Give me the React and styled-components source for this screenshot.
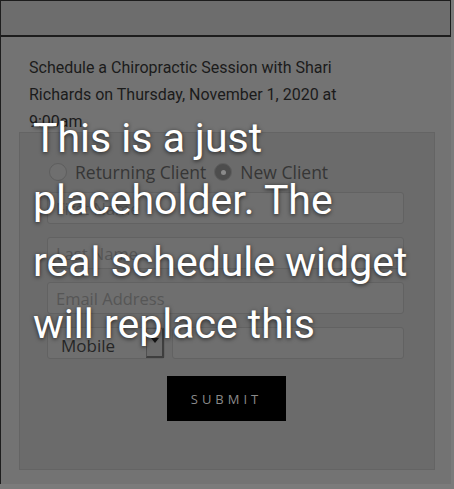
import React from "react";
import styled, { createGlobalStyle } from "styled-components";

const GlobalStyle = createGlobalStyle`
  html, body {
    margin: 0;
    padding: 0;
    background: #7b7b7b;
    font-family: "Roboto", "Liberation Sans", sans-serif;
  }
`;

const App = () => {
  return (
    <>
      <GlobalStyle />
      <Modal>
        <Header />
        <Body>
          <Description>
            Schedule a Chiropractic Session with Shari Richards on Thursday,
            November 1, 2020 at 9:00am
          </Description>
          <FormPanel>
            <RadioRow>
              <RadioLabel>
                <Radio />
                Returning Client
              </RadioLabel>
              <RadioLabel>
                <Radio checked />
                New Client
              </RadioLabel>
            </RadioRow>
            <Field placeholder="First Name" />
            <Field placeholder="Last Name" />
            <Field placeholder="Email Address" />
            <PhoneRow>
              <Select>
                <SelectText>Mobile</SelectText>
                <SelectArrow>
                  <svg width="8" height="5" viewBox="0 0 8 5">
                    <path d="M0 0h8L4 5z" fill="#161616" />
                  </svg>
                </SelectArrow>
              </Select>
              <PhoneField />
            </PhoneRow>
            <SubmitButton>SUBMIT</SubmitButton>
          </FormPanel>
          <Placeholder>
            This is a just
            <br />
            placeholder. The
            <br />
            real schedule widget
            <br />
            will replace this
          </Placeholder>
        </Body>
      </Modal>
    </>
  );
};

const Modal = styled.div`
  width: 451px;
  height: 484px;
  background: #737373;
  border-left: 1px solid #1e1e1e;
  display: flex;
  flex-direction: column;
  box-sizing: border-box;
`;

const Header = styled.div`
  height: 37px;
  box-sizing: border-box;
  background: #6d6d6d;
  border: 1px solid #1c1c1c;
  border-left: none;
  border-bottom-width: 2px;
`;

const Body = styled.div`
  position: relative;
  flex: 1;
  padding: 17px 16px 12px 18px;
  display: flex;
  flex-direction: column;
`;

const Description = styled.p`
  margin: 0 0 0 10px;
  font-size: 16px;
  line-height: 27px;
  color: #1b1b1b;
  width: 352px;
`;

const FormPanel = styled.div`
  margin-top: -3px;
  height: 338px;
  box-sizing: border-box;
  background: #6b6b6b;
  border: 1px solid #646464;
  padding: 28px 30px 0 27px;
  display: flex;
  flex-direction: column;
`;

const RadioRow = styled.div`
  display: flex;
  align-items: center;
  gap: 6px;
  height: 22px;
  margin-bottom: 9px;
`;

const RadioLabel = styled.label`
  display: flex;
  align-items: center;
  gap: 8px;
  font-family: "Open Sans", "Liberation Sans", sans-serif;
  font-size: 17.5px;
  color: #363636;
  margin-left: 2px;
`;

const Radio = styled.span`
  width: 18px;
  height: 18px;
  border-radius: 50%;
  box-sizing: border-box;
  border: 1px solid #5e5e5e;
  background: ${(p) => (p.checked ? "#4d4d4d" : "#6f6f6f")};
  display: grid;
  place-items: center;
  &::after {
    content: "";
    width: 5px;
    height: 5px;
    border-radius: 50%;
    background: ${(p) => (p.checked ? "#8a8a8a" : "transparent")};
  }
`;

const Field = styled.input`
  display: block;
  width: 357px;
  height: 32px;
  box-sizing: border-box;
  margin: 0 0 13px;
  padding: 0 8px;
  background: #6f6f6f;
  border: 1px solid #626262;
  border-radius: 3px;
  font-family: "Open Sans", "Liberation Sans", sans-serif;
  font-size: 16.5px;
  color: #2a2a2a;
  outline: none;
  &::placeholder {
    color: #565656;
  }
`;

const PhoneRow = styled.div`
  display: flex;
  gap: 7px;
  width: 357px;
`;

const Select = styled.div`
  width: 118px;
  height: 32px;
  box-sizing: border-box;
  background: #6f6f6f;
  border: 1px solid #626262;
  border-radius: 3px;
  display: flex;
  align-items: stretch;
`;

const SelectText = styled.span`
  flex: 1;
  font-family: "Open Sans", "Liberation Sans", sans-serif;
  font-size: 17px;
  color: #262626;
  padding: 6px 0 0 13px;
`;

const SelectArrow = styled.span`
  width: 18px;
  border: 1px solid #505050;
  border-right: 2px solid #3e3e3e;
  border-bottom: 2px solid #3e3e3e;
  background: #6a6a6a;
  display: flex;
  justify-content: center;
  padding-top: 9px;
  box-sizing: border-box;
`;

const PhoneField = styled(Field)`
  flex: 1;
  width: auto;
  margin: 0;
`;

const SubmitButton = styled.button`
  align-self: center;
  margin: 17px 0 0 2px;
  width: 119px;
  height: 45px;
  background: #000;
  border: none;
  color: #8a8a8a;
  font-family: "Open Sans", "Liberation Sans", sans-serif;
  font-size: 13px;
  letter-spacing: 4px;
  padding-left: 6px;
`;

const Placeholder = styled.div`
  position: absolute;
  left: 32px;
  top: 70px;
  font-family: "Roboto", sans-serif;
  font-size: 41px;
  line-height: 62px;
  color: #fff;
  text-shadow: 0 1px 4px rgba(0, 0, 0, 0.7);
  pointer-events: none;
`;

export default App;
